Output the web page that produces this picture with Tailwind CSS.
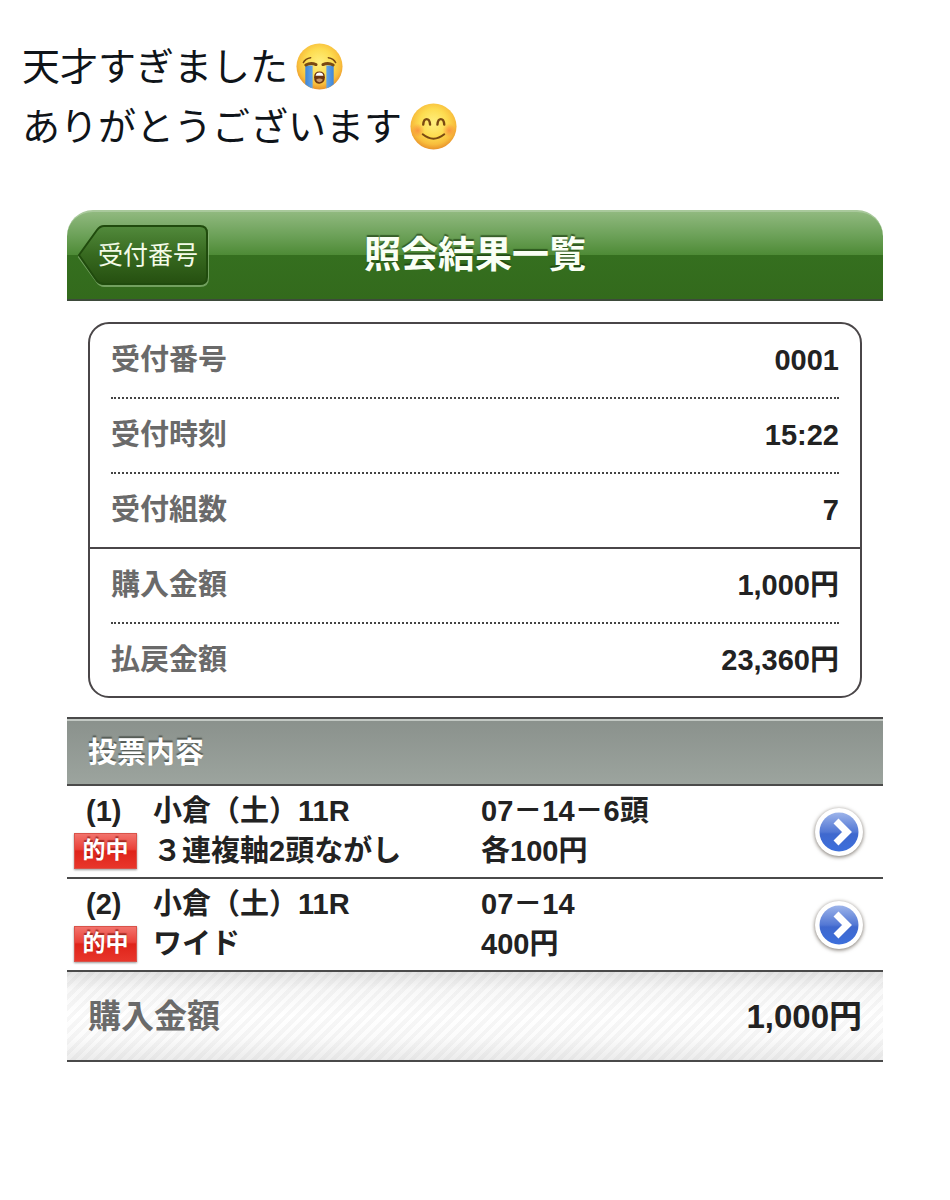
<!DOCTYPE html>
<html lang="ja">
<head>
  <meta charset="UTF-8" />
  <meta name="viewport" content="width=device-width, initial-scale=1.0" />
  <title>照会結果一覧</title>
  <script src="https://cdn.jsdelivr.net/npm/@tailwindcss/browser@4"></script>
</head>
<body class="bg-white text-[#222] font-['Liberation_Sans','Noto_Sans_CJK_JP',sans-serif]">

  <!-- Message -->
  <section class="pt-[34px] pl-[22px] text-[38px] leading-[60px] text-[#0f1419] font-['Noto_Sans_CJK_JP',sans-serif] [font-kerning:none]">
    <p class="flex items-center">天才すぎました
      <svg class="mt-1 ml-2 size-[47px]" viewBox="0 0 48 48" role="img" aria-label="大泣き">
        <defs>
          <radialGradient id="face" cx="50%" cy="42%" r="60%">
            <stop offset="0" stop-color="#fff080" />
            <stop offset="0.5" stop-color="#fddc50" />
            <stop offset="0.78" stop-color="#f8bd3c" />
            <stop offset="1" stop-color="#e58a28" />
          </radialGradient>
          <linearGradient id="tear" x1="0" y1="0" x2="1" y2="0">
            <stop offset="0" stop-color="#3f86d8" />
            <stop offset="0.5" stop-color="#85c4f5" />
            <stop offset="1" stop-color="#3f86d8" />
          </linearGradient>
        </defs>
        <circle cx="24" cy="24" r="23.500" fill="url(#face)" />
        <path d="M9.500 23H17V46.500Q13 45 9.500 42ZM31 23H38.500V42Q35 45 31 46.500Z" fill="url(#tear)" />
        <g fill="none" stroke="#7a4a12" stroke-linecap="round">
          <path d="M7.500 20Q9.500 16 15 15M40.500 20Q38.500 16 33 15" stroke-width="1.500" />
          <path d="M10 22.500Q15 19.500 20.500 22M38 22.500Q33 19.500 27.500 22" stroke-width="3" />
        </g>
        <path d="M18.500 35Q18.500 29 24 29T29.500 35T24 41.500T18.500 35Z" fill="#6b3410" />
        <path d="M20 33.500Q20.500 30 24 30T28 33.500Z" fill="#fff" />
        <path d="M20.500 37.500Q24 35 27.500 37.500Q26.500 40 24 40T20.500 37.500Z" fill="#c9996a" />
      </svg>
    </p>
    <p class="flex items-center">ありがとうございます
      <svg class="mt-1 ml-2 size-[47px]" viewBox="0 0 48 48" role="img" aria-label="笑顔">
        <defs>
          <radialGradient id="blush">
            <stop offset="0" stop-color="#f9703a" stop-opacity="0.6" />
            <stop offset="1" stop-color="#f9703a" stop-opacity="0" />
          </radialGradient>
        </defs>
        <circle cx="24" cy="24" r="23.500" fill="url(#face)" />
        <circle cx="8" cy="28" r="7" fill="url(#blush)" />
        <circle cx="40" cy="28" r="7" fill="url(#blush)" />
        <g fill="none" stroke="#7a4a12" stroke-width="2.400" stroke-linecap="round">
          <path d="M13.500 22Q14 16.500 17 16.500T20.500 22M28 22Q28.500 16.500 31.500 16.500T35 22" />
          <path d="M13 32Q24 41 35 32" stroke-width="2" />
        </g>
      </svg>
    </p>
  </section>

  <main class="mx-[67px] mt-14">
    <!-- Title bar -->
    <header class="grid h-[91px] grid-cols-[1fr_auto_1fr] items-center rounded-t-[26px] border-t-2 border-b-2 border-t-[#a9c99c] border-b-[#3d4a3a] bg-linear-[180deg,#90b97f_0%,#6ba057_28%,#4d8a35_50%,#356f1f_50%,#336a1c_100%] px-[10px]">
      <button class="relative h-[64px] w-[133px] pb-[2px] pl-[21px] text-left text-[25px] leading-[30px] text-[#f4fbe8]">
        <svg class="absolute inset-0 size-full" viewBox="0 0 133 64" aria-hidden="true">
          <defs>
            <linearGradient id="back" x1="0" y1="0" x2="0" y2="1">
              <stop offset="0" stop-color="#528a3c" />
              <stop offset="0.5" stop-color="#37691f" />
              <stop offset="1" stop-color="#254f10" />
            </linearGradient>
          </defs>
          <path d="M2 33 20 7Q23 3 27 3H123Q131 3 131 11V54Q131 62 123 62H27Q23 62 20 58Z" fill="none" stroke="#8db67c" stroke-opacity="0.700" stroke-width="2" />
          <path d="M2 31 20 6Q23 2 27 2H123Q130 2 130 9V53Q130 60 123 60H27Q23 60 20 57Z" fill="url(#back)" stroke="#204b0d" stroke-width="2" />
        </svg>
        <span class="relative">受付番号</span>
      </button>
      <h1 class="text-[37px] leading-[50px] font-bold text-[#fafff5] [text-shadow:0_-2px_1px_rgb(20_50_10/.6)]">照会結果一覧</h1>
    </header>

    <!-- Receipt summary -->
    <section class="mx-[21px] mt-[21px] rounded-[21px] border-2 border-[#4a4648] text-[29px] leading-[40px]">
      <div class="border-b-2 border-[#4a4648] px-[21px]">
        <table class="block">
          <tbody class="block">
            <tr class="flex h-[75px] items-center justify-between border-b-2 border-dotted border-[#444] pb-[2px]">
              <th class="p-0 text-[#6a6a6a]">受付番号</th>
              <td class="p-0 font-bold">0001</td>
            </tr>
            <tr class="flex h-[75px] items-center justify-between border-b-2 border-dotted border-[#444] pb-[2px]">
              <th class="p-0 text-[#6a6a6a]">受付時刻</th>
              <td class="p-0 font-bold">15:22</td>
            </tr>
            <tr class="flex h-[73px] items-center justify-between pb-[2px]">
              <th class="p-0 text-[#6a6a6a]">受付組数</th>
              <td class="p-0 font-bold">7</td>
            </tr>
          </tbody>
        </table>
      </div>
      <div class="px-[21px]">
        <table class="block">
          <tbody class="block">
            <tr class="flex h-[75px] items-center justify-between border-b-2 border-dotted border-[#444] pb-[2px]">
              <th class="p-0 text-[#6a6a6a]">購入金額</th>
              <td class="p-0 font-bold">1,000円</td>
            </tr>
            <tr class="flex h-[72px] items-center justify-between">
              <th class="p-0 text-[#6a6a6a]">払戻金額</th>
              <td class="p-0 font-bold">23,360円</td>
            </tr>
          </tbody>
        </table>
      </div>
    </section>

    <!-- Bets -->
    <section class="mt-[19px] text-[29px] leading-[40px] font-bold">
      <h2 class="border-y-2 border-[#4a4a4a] bg-linear-to-b from-[#8a918c] to-[#9ca49e] px-[21px] pt-[14px] pb-[11px] text-white inset-shadow-[0_2px_0_#c3c9c4] [text-shadow:0_-2px_1px_rgb(60_65_60/.7)]">投票内容</h2>
      <table class="w-full table-fixed border-separate border-spacing-0">
        <tr class="h-[93px]">
          <td class="w-[86px] border-b-2 border-[#4a4a4a] pt-[5px] pb-[6px] pl-[7px]">
            <span class="ml-3 block">(1)</span>
            <span class="my-[2px] block h-9 w-[63px] border border-[#d9534a] bg-linear-[180deg,#f2736c_0%,#ea4038_45%,#df241a_50%,#e8362b_100%] text-center text-[23px] leading-[33px] text-white shadow-[0_1px_2px_rgb(0_0_0/.4)] [text-shadow:0_-2px_1px_rgb(120_10_5/.6)]">的中</span>
          </td>
          <td class="w-[328px] border-b-2 border-[#4a4a4a] pt-[5px] pb-[6px]">小倉（土）11R<br />３連複軸2頭ながし</td>
          <td class="border-b-2 border-[#4a4a4a] pt-[5px] pb-[6px]">07－14－6頭<br />各100円</td>
          <td class="w-[74px] border-b-2 border-[#4a4a4a] p-0">
            <button class="block" aria-label="詳細">
              <svg class="size-[60px]" viewBox="0 0 60 60" aria-hidden="true">
                <defs>
                  <linearGradient id="blue" x1="0" y1="0" x2="0" y2="1">
                    <stop offset="0" stop-color="#9db4ea" />
                    <stop offset="0.5" stop-color="#5277d4" />
                    <stop offset="0.55" stop-color="#3f68ce" />
                    <stop offset="1" stop-color="#3c6fdc" />
                  </linearGradient>
                </defs>
                <circle cx="30" cy="30" r="24" fill="#fff" class="drop-shadow-[0_1px_2px_rgb(70_60_50/.75)]" />
                <circle cx="30" cy="30" r="19.500" fill="url(#blue)" />
                <path d="M27 19 38 30 27 41" fill="none" stroke="#fff" stroke-width="7" />
              </svg>
            </button>
          </td>
        </tr>
        <tr class="h-[93px]">
          <td class="border-b-2 border-[#4a4a4a] pt-[5px] pb-[6px] pl-[7px]">
            <span class="ml-3 block">(2)</span>
            <span class="my-[2px] block h-9 w-[63px] border border-[#d9534a] bg-linear-[180deg,#f2736c_0%,#ea4038_45%,#df241a_50%,#e8362b_100%] text-center text-[23px] leading-[33px] text-white shadow-[0_1px_2px_rgb(0_0_0/.4)] [text-shadow:0_-2px_1px_rgb(120_10_5/.6)]">的中</span>
          </td>
          <td class="border-b-2 border-[#4a4a4a] pt-[5px] pb-[6px]">小倉（土）11R<br />ワイド</td>
          <td class="border-b-2 border-[#4a4a4a] pt-[5px] pb-[6px]">07－14<br />400円</td>
          <td class="border-b-2 border-[#4a4a4a] p-0">
            <button class="block" aria-label="詳細">
              <svg class="size-[60px]" viewBox="0 0 60 60" aria-hidden="true">
                <circle cx="30" cy="30" r="24" fill="#fff" class="drop-shadow-[0_1px_2px_rgb(70_60_50/.75)]" />
                <circle cx="30" cy="30" r="19.500" fill="url(#blue)" />
                <path d="M27 19 38 30 27 41" fill="none" stroke="#fff" stroke-width="7" />
              </svg>
            </button>
          </td>
        </tr>
      </table>
    </section>

    <!-- Total -->
    <footer class="border-b-2 border-[#4a4a4a] bg-linear-[180deg,#e4e4e4_0%,#f8f8f8_20%,#fff_50%,#fbfbfb_75%,#ececec_100%]">
      <div class="flex h-[88px] items-center justify-between bg-[repeating-linear-gradient(135deg,rgb(0_0_0/.03)_0_4px,transparent_4px_8px)] px-[21px] pt-[2px] text-[33px] leading-[48px] font-bold">
        <span class="text-[#6a6a6a]">購入金額</span>
        <span>1,000円</span>
      </div>
    </footer>
  </main>

</body>
</html>
